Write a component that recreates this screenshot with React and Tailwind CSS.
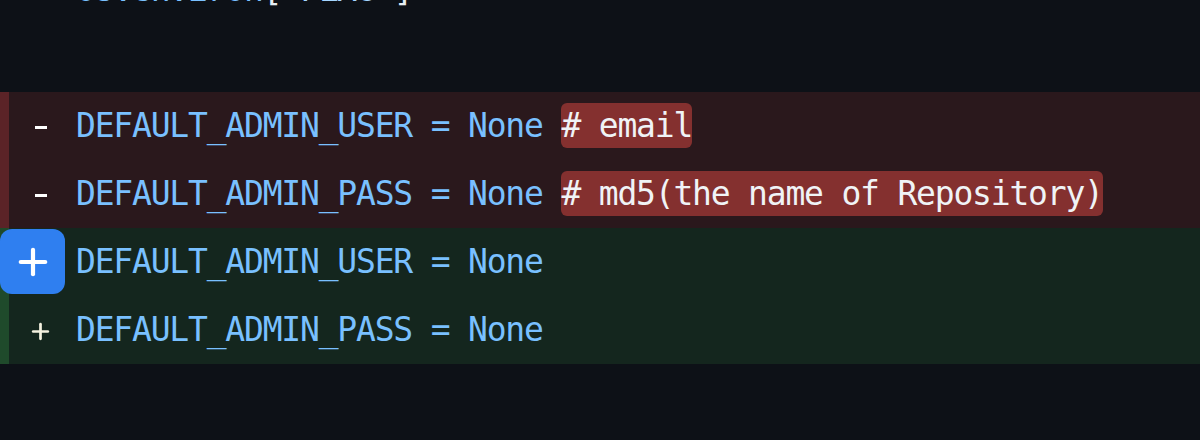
import { Plus } from "lucide-react";

const mono = "font-['DejaVu_Sans_Mono','Liberation_Mono',monospace] text-[33px] tracking-[-1.2px]";

function Row({ kind, marker, children }) {
  const bg = kind === "del" ? "bg-[#2a181c]" : kind === "add" ? "bg-[#14261e]" : "";
  const stripe =
    kind === "del" ? "bg-[#5b2327]" : kind === "add" ? "bg-[#1f4a2b]" : "bg-transparent";
  return (
    <div className={`relative flex h-[68px] items-center ${bg}`}>
      <div className={`h-full w-[9px] shrink-0 ${stripe}`} />
      <div className="flex w-[67px] shrink-0 items-center justify-center pr-[4px] text-white">
        {marker}
      </div>
      <div className={`whitespace-pre text-[#79c0ff] ${mono}`}>{children}</div>
    </div>
  );
}

function Hl({ children }) {
  return (
    <span className="rounded-[6px] bg-[#84302f] py-[3px] text-[#f0f3f6]">{children}</span>
  );
}

export default function App() {
  return (
    <div className="h-[440px] w-[1200px] overflow-hidden bg-[#0d1117]">
      <div className="-mt-[44px]">
        <Row>
          os.environ<span className="text-[#e6edf3]">[</span>
          <span className="text-[#a5d6ff]">'FLAG'</span>
          <span className="text-[#e6edf3]">]</span>
        </Row>
        <Row />
        <Row kind="del" marker={<span className="mt-[2px] block h-[3px] w-[12px] bg-white" />}>
          DEFAULT_ADMIN_USER = None <Hl># email</Hl>
        </Row>
        <Row kind="del" marker={<span className="mt-[2px] block h-[3px] w-[12px] bg-white" />}>
          DEFAULT_ADMIN_PASS = None <Hl># md5(the name of Repository)</Hl>
        </Row>
        <div className="relative">
          <Row kind="add">DEFAULT_ADMIN_USER = None</Row>
          <button className="absolute left-0 top-[1px] flex h-[65px] w-[65px] items-center justify-center rounded-[12px] bg-[#2f7ff0] text-white">
            <Plus size={42} strokeWidth={2.4} />
          </button>
        </div>
        <Row
          kind="add"
          marker={<Plus size={25} strokeWidth={2.6} className="mt-[3px] text-[#f4f1e0]" />}
        >
          DEFAULT_ADMIN_PASS = None
        </Row>
      </div>
    </div>
  );
}
